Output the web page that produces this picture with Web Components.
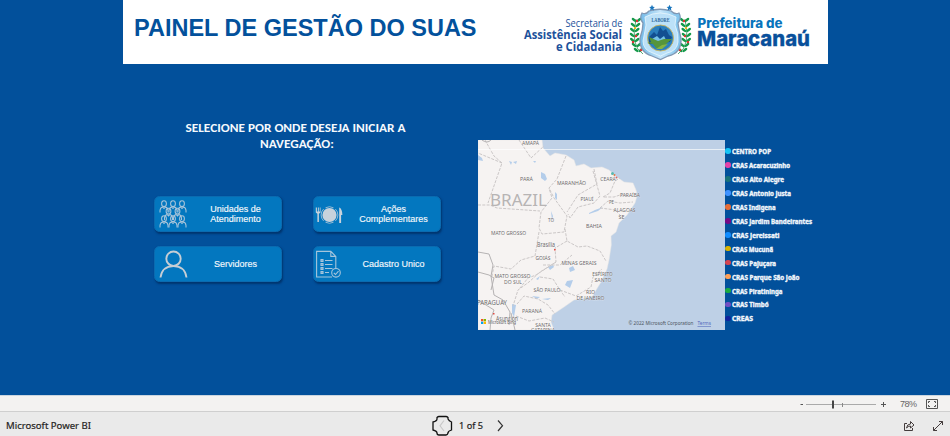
<!DOCTYPE html>
<html lang="pt-BR">
<head>
<meta charset="utf-8">
<title>Painel de Gestão do SUAS</title>
<style>
html,body{margin:0;width:950px;height:436px;overflow:hidden;background:#02509b;font-family:"Liberation Sans",Arial,sans-serif}
</style>
</head>
<body>
<suas-app></suas-app>
<script>
const define = (name, html) => customElements.define(name, class extends HTMLElement {
  constructor() {
    super();
    this.attachShadow({mode: 'open'}).innerHTML = typeof html === 'function' ? html(this) : html;
  }
});

/* Municipal logo with crest */
const leaves = side => {
  let out = '';
  for (let i = 0; i < 7; i++) {
    const y = 52 - i * 5, x = 636.5 - Math.sin(i / 6 * Math.PI) * 2 + (i < 2 ? 2 - i : 0);
    out += `<ellipse cx="${x - 2.4}" cy="${y - 2}" rx="2.900" ry="1.300" transform="rotate(38 ${x - 2.4} ${y - 2})"/>
      <ellipse cx="${x + 2.4}" cy="${y - 2}" rx="2.900" ry="1.300" transform="rotate(-38 ${x + 2.4} ${y - 2})"/>`;
  }
  const berries = [[637,21,'#d33'],[635,28,'#e8b91c'],[636,36,'#d33'],[633,42,'#d33'],[641,50,'#d33']]
    .map(b => `<circle cx="${b[0]}" cy="${b[1]}" r="1.2" fill="${b[2]}"/>`).join('');
  return `<g ${side ? 'transform="translate(1321 0) scale(-1 1)"' : ''}><path d="M643 54Q630 46 636 19" fill="none" stroke="#12863d" stroke-width=".7"/><g fill="#15994a">${out}</g>${berries}</g>`;
};
define('city-logo', `<style>:host{display:block;width:300px;height:64px}svg{display:block}</style>
<svg width="300" height="64" viewBox="522 0 300 64">
<defs><linearGradient id="sh" x2="1"><stop stop-color="#71b9e8"/><stop offset=".5" stop-color="#c6e6fa"/><stop offset="1" stop-color="#79bfea"/></linearGradient></defs>
<g fill="#1c519b" font-family="Open Sans,sans-serif" text-anchor="end">
<text x="622.5" y="27" font-size="11.500" textLength="57" lengthAdjust="spacingAndGlyphs">Secretaria de</text>
<text x="622" y="39" font-size="12.3" font-weight="700" textLength="98" lengthAdjust="spacingAndGlyphs">Assistência Social</text>
<text x="622" y="51.3" font-size="12.3" font-weight="700" textLength="66" lengthAdjust="spacingAndGlyphs">e Cidadania</text></g>
${leaves(0)}${leaves(1)}
<path d="M642 13Q646 15 649 11Q660 7.500 671 11Q675 15 679 13Q682 18 678 23Q679 31 681 38Q682 53 668 56L660.500 59.500L652 56Q639 52 640 38Q643 30 643 23Q639 18 642 13Z" fill="url(#sh)" stroke="#8198b4" stroke-width="1.300"/>
<path d="M645 17Q660 9 676 17L675 25Q679 34 678 42Q677 51 667 53L660.500 56L653 53Q643 50 643 41Q645 31 646 25Z" fill="#bce1f8" stroke="#e9f6fd" stroke-width=".8"/>
<circle cx="660.500" cy="38" r="13" fill="#2b7fbd" stroke="#d0b65b" stroke-width=".9"/>
<path d="M649 37l5-5 3 3 3-8 3 4 3-2 3 6 3 2-2 5-21 2z" fill="#124f91"/>
<path d="M652 39l5-3 3 3 4-3 2 4-4 5-6-1z" fill="#75c2e6"/>
<path d="M649 37l9 4 6-2 8 0-6 5-4 4h-6l-3-4-6-1 4-1z" fill="#56953b"/><path d="M656 49l6-4 6-1-6 5z" fill="#85b342"/>
<text x="660.500" y="22" font-family="Liberation Serif,serif" font-weight="700" font-size="5.700" text-anchor="middle" fill="#29669a" textLength="18" lengthAdjust="spacingAndGlyphs">LABORE</text>
<g fill="#1975bd"><path id="st" d="M652 4.800l.9 1.900 2 .2-1.500 1.400.5 2.200-1.900-1.100-1.900 1.100.5-2.200-1.500-1.400 2-.2z"/><use href="#st" x="17.500"/></g>
<g font-family="Inter,sans-serif"><text x="697.500" y="28" font-size="13" font-weight="800" fill="#0874bc" textLength="85" lengthAdjust="spacingAndGlyphs">Prefeitura de</text>
<text x="697" y="46" font-size="20.500" font-weight="800" fill="#09509b" stroke="#09509b" stroke-width=".3" textLength="113" lengthAdjust="spacingAndGlyphs">Maracanaú</text></g></svg>`);

define('page-banner', `<style>:host{display:flex;box-sizing:border-box;width:705px;height:64px;margin-left:123px;padding-left:11px;background:#fff;justify-content:space-between}
h1{margin:0;font-size:23.500px;line-height:57px;color:#03519c;font-weight:700;white-space:nowrap}city-logo{margin-right:6px}</style>
<h1><slot></slot></h1><city-logo></city-logo>`);

const person = (x, y) => `<g transform="translate(${x} ${y})"><ellipse cx="4.500" cy="3.200" rx="2.400" ry="2.900"/><path d="M.5 12V10Q.8 7 3 6.500L4.500 8 6 6.500Q8.300 7 8.500 10v2"/></g>`;
const icons = {
  people: `<g fill="none" stroke="#a9c5da" stroke-width="1.050">${person(.5,.5)}${person(9.500,.5)}${person(18.500,.5)}${person(5,8)}${person(14,8)}${person(.5,15.500)}${person(9.500,15.500)}${person(18.500,15.500)}</g>`,
  plate: `<g fill="#c8d2dc"><circle cx="14.500" cy="15" r="7.100"/><path d="M8.600 9.100a8.200 8.200 0 0 0 0 11.800M20.400 9.100a8.200 8.200 0 0 1 0 11.800M10.500 7.800a8.200 8.200 0 0 1 8 0M10.500 22.200a8.200 8.200 0 0 0 8 0" fill="none" stroke="#b6c9d8" stroke-width=".8"/><path d="M.8 7.500v5l1.600 1.300V22h1.500v-8.200l1.600-1.300v-5h-.7v4h-1v-4h-.9v4h-1v-4zM24.200 7.500q3 1 3.200 7.500h-1.300v8h-1.900z"/></g>`,
  user: `<g fill="none" stroke="#c6ced5" stroke-width="1.900"><circle cx="14.500" cy="8.700" r="7.200"/><path d="M1.500 27.500C2.500 19.500 8 16 14.500 16s12 3.500 13 11.500"/></g>`,
  list: `<g fill="none" stroke="#a6c5dc" stroke-width="1.100"><path d="M17 27H1.600V1.400h14.200l5 5v12M15.800 1.400v5h5"/><path d="M6 9.600h2v1.800H6zM6 13.600h2v1.800H6zM6 17.600h2v1.800H6zM6 21.600h2v1.800H6zM10 10.500h7.500M10 14.500h7.500M10 18.500h7.500M10 22.500h4"/><circle cx="21" cy="22.800" r="4.300"/><path d="M18.800 22.800l1.700 1.700 3-3.300"/></g>`
};
define('nav-tile', el => `<style>:host{display:flex;align-items:center;box-sizing:border-box;width:128px;height:36px;border-radius:5.500px;background:#0377bf;border:1px solid #0b6bb0;box-shadow:1px 1.500px 2px #00356f;color:#f3f8fc;font-size:9px;line-height:10px;text-align:center;-webkit-text-stroke:.15px #f3f8fc}
svg{flex:none;width:29px;height:29px;margin-left:4px}:host([icon=plate]) svg,:host([icon=list]) svg{margin:0 2px 0 1.500px}p{margin:0 0 1px 11px;width:73px;flex:none}</style>
<svg viewBox="0 0 29 29">${icons[el.getAttribute('icon')]}</svg><p><slot></slot></p>`);

define('nav-section', `<style>:host{display:block;width:287px}
h2{margin:0 0 44px;padding-right:5px}
h2 svg{display:block;margin:auto}.grid{display:grid;grid-template-columns:128px 128px;column-gap:30.500px;row-gap:14px}</style>
<h2><svg width="230" height="32" fill="#f5f9fd" font-family="Carlito,Open Sans,sans-serif" font-weight="700" font-size="12.400" text-anchor="middle"><text x="115.500" y="12" textLength="220" lengthAdjust="spacingAndGlyphs">SELECIONE POR ONDE DESEJA INICIAR A</text><text x="117" y="28" textLength="74" lengthAdjust="spacingAndGlyphs">NAVEGAÇÃO:</text></svg></h2>
<div class="grid"><nav-tile icon="people">Unidades de<br>Atendimento</nav-tile><nav-tile icon="plate">Ações<br>Complementares</nav-tile><nav-tile icon="user">Servidores</nav-tile><nav-tile icon="list">Cadastro Unico</nav-tile></div>`);

/* State labels: text, centre x, baseline y, width */
const labels = [['AMAPÁ',530.5,144.5,17],['PARÁ',526.5,180.5,13],['MARANHÃO',571.5,185.3,29],['PIAUÍ',587,200.5,13],['CEARÁ',608,180.5,15.5],['PARAÍBA',630,197.3,20],['PE',611.5,204,5],['ALAGOAS',624.5,211.5,22],['SE',621.5,218.7,6],['BAHIA',594,228.3,16],['TO',551,222,6],['MATO GROSSO',508.5,234.7,35],['GOIÁS',543,260,15],['MINAS GERAIS',579,264.5,35],['MATO GROSSO',512.5,278,36],['DO SUL',513,283.7,18],['SÃO PAULO',547,292,27],['ESPÍRITO',602.5,276,20.5],['SANTO',603,281.5,17],['RIO',590.5,294.3,9],['DE JANEIRO',590.5,299.5,28],['PARANÁ',532,313,20],['SANTA',543,326.5,15.5],['CATARINA',543,331.5,24]];
define('brazil-map', `<style>:host{display:block;width:246.500px;height:190px;overflow:hidden}svg{display:block}</style>
<svg width="247" height="190" viewBox="478 140 247 190">
<path fill="#bed0e6" d="M478 140h247v190H478z"/>
<path fill="#f6f3f2" stroke="#e9e6e5" stroke-width=".5" d="M478 140H542L543 148L550 156L555 153L566 155L574 160L576 166L584 164L591 168L602 167L609 170L617 177L624 182L633 183L636 190L637.300 195L635 203L627 215L619 223L616 232L611 236L611.300 245L609 260L607 269L601 282L595.500 291L592 297L574 300L564 307L552 315L551 322L554 330H478Z"/>
<g fill="#b4cdea"><path d="M541 172l4 2 2 5-2 2-4-3zM478 155l4 3 1 3-5-1zM509 161l3 1-1 3zM513 162l4-1-1 3zM533 161l3 0-1 2zM555 192l2 2 0 6-2-2zM589 213l6-3 8-3-5 4-9 3zM551 211l2 5-1 5zM548 267l5-2 1 2-4 3zM569 268l4-2 2 4-5 2zM567 281l6-1-3 8-5-3zM536 279l4-3-2 4zM532 296l8 1-3 2zM542 299l9-1-3 2zM512 304l4 1-2 12-2-4z"/></g>
<g fill="none" stroke="#cbc7c7" stroke-width="1" stroke-dasharray="3 1.300"><path d="M478 205H490L497 208 540 211M485 140L494 156 502 163 488 203M519 140L531 158 544 146M502 163L478 153M566 156L557 179 549 188 552 198 541 212 539 228 542 234 564 232 567 216 554 198 549 188M594 169L597 184 578 195 567 212M593 171L600 196 594 203 578 207 570 218 568 214M603 197l7-4 5-12 5-3M604 197l10 0 9-3 7 2M600 208l8-7 12 2 13-1M600 208l16 2M616 211l7 7M565 229L567 241 578 247 587 246 600 251 606 261M539 232l-4 24-14 4-10 9-17-3-2 10M567 241l-12 7 1 14-16 10-11 10-11 8-5 16M556 262l-20 13-8 3-8 10M540 277l13 2 7 11 5 7M543 265l17 0 12-10M560 290l16 6 15-9 2-10 9-8M517 304l7-8 14 3 10 6 7 9M516 316l13 5 16-3 9 4"/></g>
<g fill="none" stroke="#b5b2b3" stroke-width="1"><path d="M478 252l11 2 4 11-2 11 3 19 9 5 7 12-1 13M478 272l11 3 5 3-3 12M478 300l16 10-3 8-1 12M511 313l4 17M482 140q5 4 9 0"/></g>
<path d="M478 149.500H725" stroke="#fff" stroke-opacity=".65"/>
<text x="490" y="206" fill="#b7b4b4" font-family="Noto Sans,sans-serif" font-size="17" textLength="57" lengthAdjust="spacingAndGlyphs">BRAZIL</text>
<g fill="#6b6869" stroke="#fff" stroke-width=".6" stroke-opacity=".6" paint-order="stroke" font-family="Noto Sans,sans-serif" font-size="5.700" text-anchor="middle">${labels.map(l=>`<text x="${l[1]}" y="${l[2]}" textLength="${l[3]}" lengthAdjust="spacingAndGlyphs">${l[0]}</text>`).join('')}
<text x="546" y="247" font-size="6.500" textLength="18" lengthAdjust="spacingAndGlyphs">Brasília</text><text x="492" y="304.500" font-size="6.500" textLength="30" lengthAdjust="spacingAndGlyphs">PARAGUAY</text><text x="507" y="320.500" font-size="6.800" textLength="22" lengthAdjust="spacingAndGlyphs">Asunción</text>
<text x="502" y="323.500" font-size="5.700" fill="#555" textLength="28" lengthAdjust="spacingAndGlyphs">Microsoft Bing</text></g>
<g font-family="Noto Sans,sans-serif" font-size="5.700"><text x="628.500" y="325.300" fill="#4c5460" textLength="65" lengthAdjust="spacingAndGlyphs">© 2022 Microsoft Corporation</text><text x="697.500" y="325.300" fill="#5368bd" text-decoration="underline" textLength="13.500" lengthAdjust="spacingAndGlyphs">Terms</text></g>
<path fill="#f25022" d="M481 319h2.300v2.300H481z"/><path fill="#7fba00" d="M483.700 319h2.300v2.300h-2.300z"/><path fill="#00a4ef" d="M481 321.700h2.300v2.300H481z"/><path fill="#ffb900" d="M483.700 321.700h2.300v2.300h-2.300z"/>
<path fill="#e24b42" d="M554 249h1.600v1.600H554zM493 313h1.500v1.500H493z"/>
<circle cx="612.500" cy="173.500" r="1.500" fill="#57b9b0"/><circle cx="614.500" cy="175" r="1" fill="#e07847"/><circle cx="616.500" cy="177.500" r="1" fill="#d96568"/></svg>`);

const legend = [['CENTRO POP','#16c5f5',39],['CRAS Acaracuzinho','#e542a8',58],['CRAS Alto Alegre','#197278',52],['CRAS Antonio Justa','#4092ff',59],['CRAS Indigena','#e66c37',43.500],['CRAS Jardim Bandeirantes','#750985',80],['CRAS Jereissati','#118dff',47.500],['CRAS Mucunã','#d9b300',41],['CRAS Pajuçara','#d64550',44],['CRAS Parque São João','#ffa058',67.500],['CRAS Piratininga','#1aab40',50.500],['CRAS Timbó','#744ec2',36.500],['CREAS','#12239e',21]];
define('map-legend', `<style>:host{display:grid;grid-auto-rows:13.960px}.row{display:flex;height:14px;align-items:center}i{width:5.600px;height:5.600px;border-radius:50%;margin:0 1px 0 .500px}svg{display:block;overflow:visible}</style>
${legend.map(l=>`<div class="row"><i style="background:${l[1]}"></i><svg width="90" height="14"><text x="0" y="9.700" font-family="Noto Sans,sans-serif" font-weight="700" font-size="6.900" fill="#f1f6fb" stroke="#f1f6fb" stroke-width=".4" textLength="${l[2]}" lengthAdjust="spacingAndGlyphs">${l[0]}</text></svg></div>`).join('')}`);

define('zoom-bar', `<style>:host{display:flex;box-sizing:border-box;height:16px;background:#f3f2f1;border-top:1px solid #c9d5e0;align-items:center;justify-content:flex-end;padding-right:12px;color:#666;font-size:9px}span{width:17px;margin:0 9px 0 13px;letter-spacing:-.45px}svg{display:block}</style>
<svg width="88" height="16" fill="none"><path d="M1.500 8.500h2.500M82 8.500h5M84.500 6v5" stroke="#555"/><path d="M7 8.500h70" stroke="#aaa"/><path d="M34 4.500v8" stroke="#444" stroke-width="2"/><path d="M43.500 7v4" stroke="#888"/></svg><span>78%</span>
<svg width="12" height="10" fill="none" stroke="#555"><path d="M.5.500h11v9H.5z"/><path d="M2.500 4V2.500H4M8 2.500h1.500V4M2.500 6v1.500H4M8 7.500h1.500V6"/></svg>`);

define('report-footer', `<style>:host{display:grid;grid-template-columns:1fr auto 1fr;align-items:center;box-sizing:border-box;height:25px;background:#eaeaea;border-top:1px solid #cfcfcf;padding:3px 6px 0;color:#252423;font-size:10px}
.mid{display:flex;align-items:center;margin-right:11px}.tools{display:flex;justify-content:flex-end;gap:16px}svg{display:block}.brand svg,.mid svg{overflow:visible}</style>
<div class="brand"><svg width="90" height="16"><text x="0" y="11" fill="#252423" font-family="Noto Sans,sans-serif" font-size="9.500" textLength="85" lengthAdjust="spacingAndGlyphs" stroke="#252423" stroke-width=".2">Microsoft Power BI</text></svg></div>
<div class="mid"><svg width="75" height="20" fill="none"><path d="M5 1.500Q6 .5 7 .5H14Q15 .5 16 1.500V3Q17 5 19.500 6V14Q16 15 16 17Q15.500 19 14 19H7Q5 19 5 17Q5 15 1 14V6Q5 5 5 3Z" stroke="#111" stroke-width="1.300"/><path d="M12 4.500L8 9.800l4 5.200" stroke="#c8c8c8" stroke-width="1.100"/><path d="M66 4.500l4.500 5.200L66 15" stroke="#333" stroke-width="1.200"/><text x="27" y="13" fill="#222" stroke="#222" stroke-width=".2" font-family="Noto Sans,sans-serif" font-size="9.500" textLength="24" lengthAdjust="spacingAndGlyphs">1 of 5</text></svg></div>
<div class="tools"><svg width="13" height="12" fill="none" stroke="#443c3c"><path d="M4 3.500H1.500v7h8V8M3.500 8Q4 4 7.500 4V1.500L11 5 7.500 8V6Q5 6 3.500 8z"/></svg><svg width="12" height="12" fill="none" stroke="#443c3c"><path d="M1.500 10.500l9-9M7 1.500h3.500V5M1.500 7v3.500H5"/></svg></div>`);

define('suas-app', `<style>:host{display:flex;flex-direction:column;width:950px;height:436px;background:#02509b}
main{display:flex;flex:1;min-height:0;align-items:flex-start}nav-section{margin:56px 0 0 154px}brazil-map{margin:76px 0 0 37px;flex:none}map-legend{margin-top:80px}</style>
<page-banner>PAINEL DE GESTÃO DO SUAS</page-banner><main><nav-section></nav-section><brazil-map></brazil-map><map-legend></map-legend></main><zoom-bar></zoom-bar><report-footer></report-footer>`);
</script>
</body>
</html>
